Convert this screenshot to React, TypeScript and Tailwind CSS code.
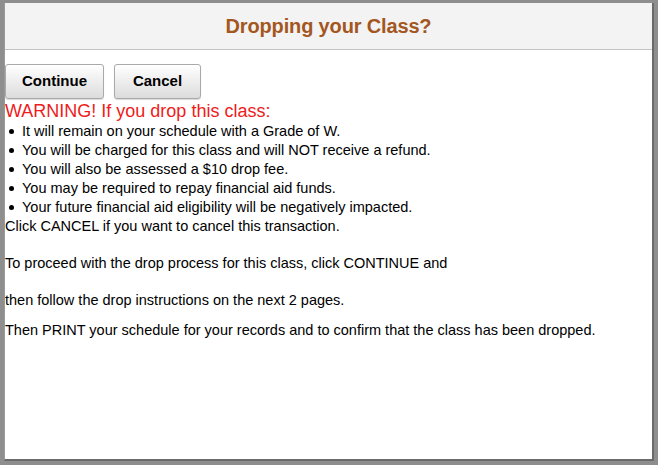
import React from "react";

const bullets = [
  "It will remain on your schedule with a Grade of W.",
  "You will be charged for this class and will NOT receive a refund.",
  "You will also be assessed a $10 drop fee.",
  "You may be required to repay financial aid funds.",
  "Your future financial aid eligibility will be negatively impacted.",
];

export default function App() {
  return (
    <div
      className="relative w-[658px] h-[465px] overflow-hidden bg-[#8e8e8e] pl-[4px] pt-[3px]"
      style={{ fontFamily: '"Liberation Sans", Arial, sans-serif' }}
    >
      <div className="w-[650px] h-[458px] bg-white border-r-2 border-b-2 border-[#6a6a6a] border-l border-l-[#9a9a9a] flex flex-col">
        <div className="h-[47px] shrink-0 bg-[#f3f3f3] border-b border-[#c4c4c4] flex items-center justify-center">
          <span className="text-[20px] font-bold text-[#a3571f] tracking-[-0.15px]">
            Dropping your Class?
          </span>
        </div>
        <div className="pt-[14px] flex flex-col">
          <div className="flex gap-[10px]">
            <button className="w-[99px] h-[35px] rounded-[3px] border border-[#a9a9a9] bg-gradient-to-b from-white to-[#dcdcdc] text-[15px] font-bold text-black shadow-[0_1px_1px_rgba(0,0,0,0.15)]">
              Continue
            </button>
            <button className="w-[87px] h-[35px] rounded-[3px] border border-[#a9a9a9] bg-gradient-to-b from-white to-[#dcdcdc] text-[15px] font-bold text-black shadow-[0_1px_1px_rgba(0,0,0,0.15)]">
              Cancel
            </button>
          </div>
          <div className="text-[18px] leading-[22px] text-[#ee1c1c] mt-[1px]">
            WARNING! If you drop this class:
          </div>
          <ul className="text-[14.5px] leading-[19px] text-black">
            {bullets.map((b) => (
              <li key={b} className="flex items-center">
                <span className="w-[5px] h-[5px] shrink-0 rounded-full bg-black ml-[4px] mr-[8px]" />
                {b}
              </li>
            ))}
          </ul>
          <p className="text-[14.5px] leading-[19px] text-black">
            Click CANCEL if you want to cancel this transaction.
          </p>
          <p className="text-[14.5px] leading-[19px] text-black mt-[18px]">
            To proceed with the drop process for this class, click CONTINUE and
          </p>
          <p className="text-[14.5px] leading-[19px] text-black mt-[18px]">
            then follow the drop instructions on the next 2 pages.
          </p>
          <p className="text-[14.5px] leading-[19px] text-black mt-[11px]">
            Then PRINT your schedule for your records and to confirm that the class has been dropped.
          </p>
        </div>
      </div>
    </div>
  );
}
